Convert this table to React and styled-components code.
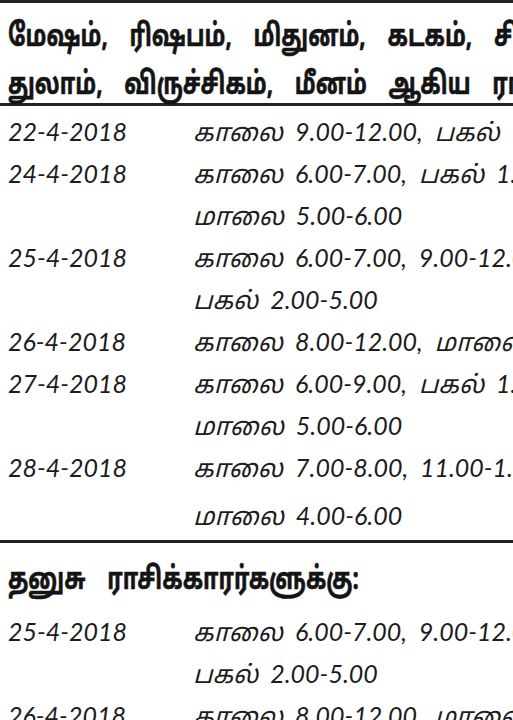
import React from 'react';
import styled, { createGlobalStyle } from 'styled-components';

const GlobalStyle = createGlobalStyle`
  html, body {
    margin: 0;
    padding: 0;
    background: #ffffff;
    overflow: hidden;
  }
`;

const TAMIL = `"Noto Sans Tamil", "Lohit Tamil", "Latha", "Noto Sans", sans-serif`;

const Page = styled.div`
  width: 513px;
  height: 720px;
  overflow: hidden;
  background: #fff;
  color: #1a1a1a;
  border-top: 3px solid #222;
  box-sizing: border-box;
`;

const Heading = styled.div`
  box-sizing: border-box;
  height: ${(p) => p.$h}px;
  padding: ${(p) => p.$pad};
  font-family: ${TAMIL};
  font-weight: 700;
  font-size: 31px;
  line-height: 48px;
  white-space: nowrap;
  color: #141414;
  -webkit-text-stroke: 0.6px #141414;
  border-bottom: ${(p) => (p.$ruled ? '3px solid #222' : 'none')};
`;

const HeadLine = styled.div`
  transform: scaleX(0.72);
  transform-origin: left center;
  word-spacing: 22px;
`;

const Rule = styled.div`
  height: 3px;
  margin-top: 2px;
  background: #222;
`;

const Schedule = styled.div`
  display: grid;
  grid-template-columns: 185px 1fr;
  padding: ${(p) => p.$pad || '0'} 0 0 8px;
  font-family: "Lato", ${TAMIL};
  font-style: italic;
  font-size: 25px;
  white-space: nowrap;
  color: #1c1c1c;
`;

const DateCell = styled.div`
  line-height: ${(p) => p.$lh}px;
  margin-top: ${(p) => p.$mt}px;
`;

const TimeCell = styled.div`
  line-height: ${(p) => p.$lh}px;
  margin-top: ${(p) => p.$mt}px;
  word-spacing: 6px;
`;

const main = [
  { date: '22-4-2018', times: ['காலை 9.00-12.00, பகல் 1.00-3.00'] },
  { date: '24-4-2018', times: ['காலை 6.00-7.00, பகல் 1.00-3.00,', 'மாலை 5.00-6.00'] },
  { date: '25-4-2018', times: ['காலை 6.00-7.00, 9.00-12.00,', 'பகல் 2.00-5.00'] },
  { date: '26-4-2018', times: ['காலை 8.00-12.00, மாலை 4.00-6.00'] },
  { date: '27-4-2018', times: ['காலை 6.00-9.00, பகல் 1.00-3.00,', 'மாலை 5.00-6.00'] },
  { date: '28-4-2018', times: ['காலை 7.00-8.00, 11.00-1.00,', 'மாலை 4.00-6.00'], last: true },
];

const dhanusu = [
  { date: '25-4-2018', times: ['காலை 6.00-7.00, 9.00-12.00,', 'பகல் 2.00-5.00'] },
  { date: '26-4-2018', times: ['காலை 8.00-12.00, மாலை 4.00-6.00'] },
];

const Rows = ({ items, pad }) => (
  <Schedule $pad={pad}>
    {items.map((it) =>
      it.times.map((t, i) => {
        const wide = it.last && i === it.times.length - 1;
        const lh = wide ? 46 : 42;
        const mt = wide ? 4 : 0;
        return (
          <React.Fragment key={it.date + i}>
            <DateCell $lh={lh} $mt={mt}>{i === 0 ? it.date : ''}</DateCell>
            <TimeCell $lh={lh} $mt={mt}>{t}</TimeCell>
          </React.Fragment>
        );
      })
    )}
  </Schedule>
);

export default function App() {
  return (
    <Page>
      <GlobalStyle />
      <Heading $ruled $h={103} $pad="11px 0 0 8px">
        <HeadLine>மேஷம், ரிஷபம், மிதுனம், கடகம், சிம்மம், கன்னி,</HeadLine>
        <HeadLine>துலாம், விருச்சிகம், மீனம் ஆகிய ராசிக்காரர்களுக்கு:</HeadLine>
      </Heading>
      <Rows items={main} pad="4px" />
      <Rule />
      <Heading $h={67} $pad="14px 0 4px 8px">
        <HeadLine>தனுசு ராசிக்காரர்களுக்கு:</HeadLine>
      </Heading>
      <Rows items={dhanusu} />
    </Page>
  );
}
